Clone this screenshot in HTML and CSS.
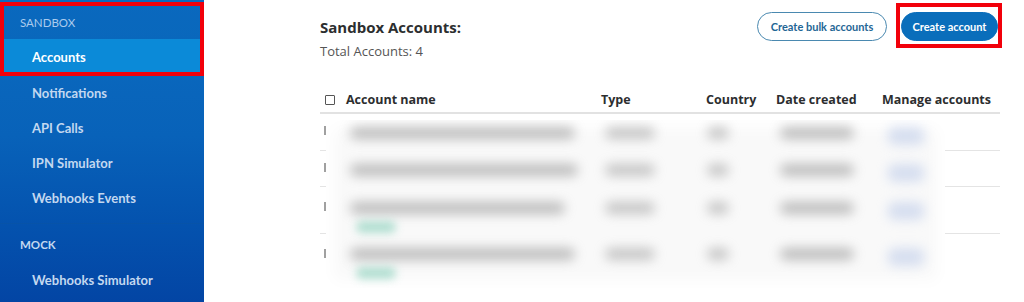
FILE: index.html
```html
<!DOCTYPE html>
<html lang="en">
<head>
<meta charset="utf-8">
<title>Sandbox Accounts</title>
<link rel="stylesheet" href="styles.css">
</head>
<body>
<div class="app">
  <nav class="sidebar">
    <div class="section">
      <div class="section-title">SANDBOX</div>
      <a class="item active">Accounts</a>
      <a class="item">Notifications</a>
      <a class="item">API Calls</a>
      <a class="item">IPN Simulator</a>
      <a class="item">Webhooks Events</a>
    </div>
    <div class="section mock">
      <div class="section-title">MOCK</div>
      <a class="item">Webhooks Simulator</a>
    </div>
    <div class="mark mark-side"></div>
  </nav>
  <main class="main">
    <div class="top">
      <div class="heading">
        <h1 class="title">Sandbox Accounts:</h1>
        <div class="total">Total Accounts: 4</div>
      </div>
      <div class="actions">
        <button class="btn btn-outline">Create bulk accounts</button>
        <div class="btn-wrap">
          <button class="btn btn-primary">Create account</button>
          <div class="mark mark-btn"></div>
        </div>
      </div>
    </div>
    <div class="table">
      <div class="thead">
        <div class="cell"><span class="checkbox"></span></div>
        <div class="cell">Account name</div>
        <div class="cell">Type</div>
        <div class="cell">Country</div>
        <div class="cell">Date created</div>
        <div class="cell">Manage accounts</div>
      </div>
      <div class="tbody">
        <div class="row r1"><span class="tick"></span></div>
        <div class="row r2"><span class="tick"></span></div>
        <div class="row r3"><span class="tick"></span></div>
        <div class="row r4 last"><span class="tick"></span></div>
        <div class="redact">
          <div class="brow r1">
            <span class="b email" style="width:225px"></span>
            <span class="b type"></span>
            <span class="b country"></span>
            <span class="b date"></span>
            <span class="b manage"></span>
          </div>
          <div class="brow r2">
            <span class="b email" style="width:228px"></span>
            <span class="b type"></span>
            <span class="b country"></span>
            <span class="b date"></span>
            <span class="b manage"></span>
          </div>
          <div class="brow r3">
            <span class="b email" style="width:215px"></span>
            <span class="b type"></span>
            <span class="b country"></span>
            <span class="b date"></span>
            <span class="b manage"></span>
            <span class="badge"></span>
          </div>
          <div class="brow r4">
            <span class="b email" style="width:225px"></span>
            <span class="b type"></span>
            <span class="b country"></span>
            <span class="b date"></span>
            <span class="b manage"></span>
            <span class="badge"></span>
          </div>
        </div>
      </div>
    </div>
  </main>
</div>
</body>
</html>
```

FILE: styles.css
```css
* { box-sizing: border-box; }
html, body { margin: 0; padding: 0; background: #fff; }
body {
  font-family: "Open Sans", "Noto Sans", "DejaVu Sans", sans-serif;
  width: 1024px;
  height: 302px;
  overflow: hidden;
}
.app { display: flex; height: 302px; }

/* Sidebar */
.sidebar {
  position: relative;
  width: 204px;
  flex: none;
  height: 302px;
  font-family: Lato, "Open Sans", sans-serif;
  background: linear-gradient(180deg, #0b6cc0 0%, #0862b9 45%, #0452ae 75%, #0345a4 100%);
  display: flex;
  flex-direction: column;
}
.section { display: flex; flex-direction: column; }
.section-title {
  height: 39px;
  line-height: 46px;
  padding-left: 20px;
  font-size: 11.5px;
  color: #abcbed;
  background: rgba(10, 100, 185, 0.35);
}
.item {
  display: block;
  height: 35px;
  line-height: 35px;
  padding-left: 32px;
  font-size: 13px;
  font-weight: 700;
  color: #c3d8f0;
}
.item.active {
  height: 37px;
  line-height: 37px;
  background: #0b8ad8;
  color: #fff;
}
.section:first-child { padding-bottom: 7px; }
.mock {
  border-top: 1px solid #0753a8;
}
.mock .section-title {
  background: none;
  height: 39px;
  line-height: 42px;
  color: #c3d8f0;
  font-weight: 700;
}
.mock .item { line-height: 35px; }

.mark {
  position: absolute;
  border: 4px solid #f2000a;
  pointer-events: none;
}
.mark-side { left: 0; top: 2px; width: 204px; height: 74px; }

/* Main */
.main {
  flex: 1;
  padding: 12px 24px 0 116px;
}
.top { display: flex; justify-content: space-between; align-items: flex-start; }
.heading { padding-top: 4px; }
.title {
  margin: 0;
  font-size: 15px;
  font-weight: 700;
  color: #2c2e2f;
  line-height: 22px;
}
.total {
  margin-top: 4px;
  font-size: 13px;
  color: #555;
  line-height: 18px;
}
.actions { display: flex; align-items: center; gap: 14px; }
.btn {
  font-family: Lato, "Open Sans", sans-serif;
  height: 29px;
  border-radius: 15px;
  font-size: 11px;
  font-weight: 700;
  padding: 0;
  white-space: nowrap;
  text-align: center;
}
.btn-outline {
  width: 130px;
  background: #fff;
  border: 1px solid #4a89b0;
  color: #1f6695;
}
.btn-primary {
  width: 97px;
  background: #0a6ebb;
  border: 1px solid #0a6ebb;
  color: #fff;
}
.btn-wrap { position: relative; margin-right: 2px; }
.mark-btn { left: -5px; top: -9px; width: 106px; height: 45px; }

/* Table */
.table { margin-top: 27px; }
.thead, .row {
  display: grid;
  grid-template-columns: 26px 255px 105px 70px 106px 1fr;
}
.thead {
  height: 27px;
  align-items: center;
  border-bottom: 2px solid #e2e2e2;
  font-size: 12.5px;
  font-weight: 700;
  color: #2c2e2f;
}
.thead .cell { white-space: nowrap; }
.checkbox {
  display: block;
  margin-left: 5px;
  width: 10px;
  height: 10px;
  border: 1px solid #555;
  border-radius: 1px;
}
.tbody { position: relative; }
.row { border-bottom: 1px solid #e4e4e4; align-items: start; }
.row.last { border-bottom: none; }
.r1 { height: 37px; }
.r2 { height: 36px; }
.r3 { height: 47px; }
.r4 { height: 48px; }
.tick {
  display: block;
  margin: 12px 0 0 4px;
  width: 2px;
  height: 9px;
  background: #a0a0a0;
}
.row.r3 .tick, .row.r4 .tick { margin-top: 15px; }

.redact {
  position: absolute;
  left: 6px;
  right: 55px;
  top: 6px;
  bottom: -6px;
  background: #f9f9f9;
  overflow: hidden;
  box-shadow: inset 0 0 16px 8px #fff;
}
.brow { position: relative; }
.brow.r1 { height: 37px; }
.brow.r2 { height: 36px; }
.brow.r3 { height: 47px; }
.brow.r4 { height: 48px; }
.redact > .brow:first-child { height: 31px; }
.b {
  position: absolute;
  top: 13px;
  height: 12px;
  border-radius: 6px;
  opacity: 0.55;
  filter: blur(6px);
}
.brow.r3 .b { top: 15px; }
.brow.r4 .b { top: 14px; }
.redact > .brow:first-child .b { top: 7px; }
.email { left: 24px; background: #8a8a8a; }
.type { left: 279px; width: 50px; background: #9a9a9a; }
.country { left: 381px; width: 22px; background: #9a9a9a; }
.date { left: 454px; width: 74px; background: #8a8a8a; }
.manage { left: 562px; width: 36px; background: #b9c8e8; height: 18px; }
.badge {
  position: absolute;
  left: 30px;
  top: 34px;
  width: 40px;
  height: 12px;
  border-radius: 6px;
  background: #9fd8c7;
  opacity: 0.8;
  filter: blur(4px);
}
.brow.r4 .badge { top: 33px; }
```
